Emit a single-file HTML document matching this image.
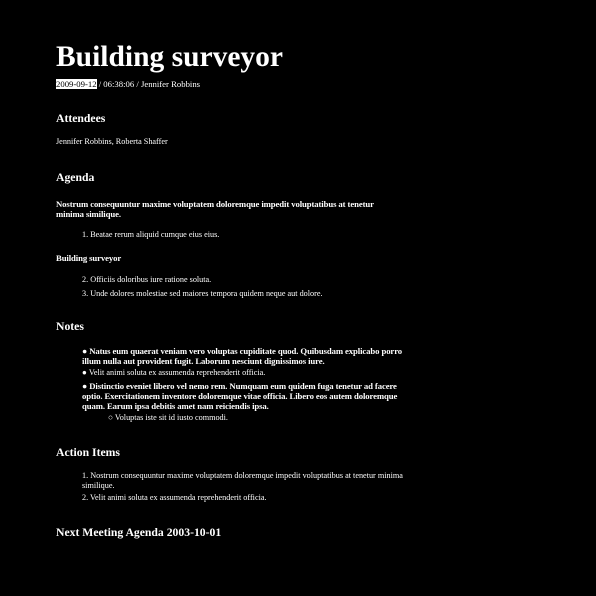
<html><head><style>
body{margin:0;background:#000;color:#fff;font-family:"Liberation Serif",serif;width:596px;height:596px;overflow:hidden;position:relative}
div{position:absolute;white-space:nowrap}
.t{font-size:8.2px;line-height:10px}
.h{font-size:11.7px;font-weight:bold;line-height:16px}
.w{white-space:normal}
.bd{font-size:8.7px;font-weight:bold;letter-spacing:-0.1px}
</style></head><body>
<div style="left:56px;top:39px;font-size:29.5px;font-weight:bold;line-height:36px">Building surveyor</div>
<div class="t" style="left:56px;top:79px;font-size:8.7px"><span style="background:#fff;color:#000">2009-09-12</span> / 06:38:06 / Jennifer Robbins</div>
<div class="h" style="left:56px;top:111px">Attendees</div>
<div class="t" style="left:56px;top:137px">Jennifer Robbins, Roberta Shaffer</div>
<div class="h" style="left:56px;top:170px">Agenda</div>
<div class="t w bd" style="left:56px;top:199px;width:345px">Nostrum consequuntur maxime voluptatem doloremque impedit voluptatibus at tenetur minima similique.</div>
<div class="t" style="left:82px;top:230px">1. Beatae rerum aliquid cumque eius eius.</div>
<div class="t bd" style="left:56px;top:253px">Building surveyor</div>
<div class="t" style="left:82px;top:275px">2. Officiis doloribus iure ratione soluta.</div>
<div class="t" style="left:82px;top:289px">3. Unde dolores molestiae sed maiores tempora quidem neque aut dolore.</div>
<div class="h" style="left:56px;top:319px">Notes</div>
<div class="t w bd" style="left:82px;top:346px;width:322px">● Natus eum quaerat veniam vero voluptas cupiditate quod. Quibusdam explicabo porro illum nulla aut provident fugit. Laborum nesciunt dignissimos iure.</div>
<div class="t" style="left:82px;top:368px">● Velit animi soluta ex assumenda reprehenderit officia.</div>
<div class="t w bd" style="left:82px;top:381px;width:318px">● Distinctio eveniet libero vel nemo rem. Numquam eum quidem fuga tenetur ad facere optio. Exercitationem inventore doloremque vitae officia. Libero eos autem doloremque quam. Earum ipsa debitis amet nam reiciendis ipsa.</div>
<div class="t" style="left:108px;top:413px">○ Voluptas iste sit id iusto commodi.</div>
<div class="h" style="left:56px;top:445px">Action Items</div>
<div class="t w" style="left:82px;top:471px;width:322px">1. Nostrum consequuntur maxime voluptatem doloremque impedit voluptatibus at tenetur minima similique.</div>
<div class="t" style="left:82px;top:493px">2. Velit animi soluta ex assumenda reprehenderit officia.</div>
<div class="h" style="left:56px;top:525px">Next Meeting Agenda 2003-10-01</div>
</body></html>
